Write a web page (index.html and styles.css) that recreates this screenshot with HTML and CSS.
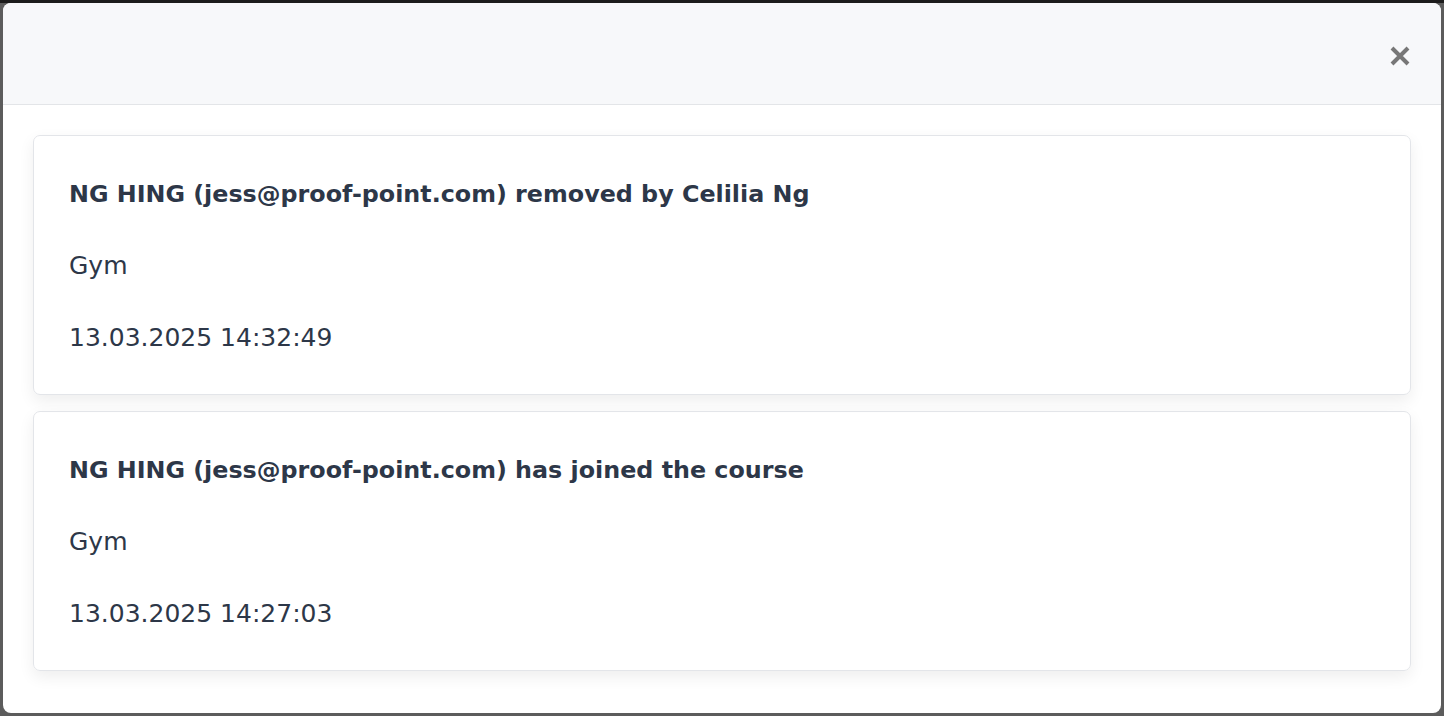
FILE: index.html
```html
<!DOCTYPE html>
<html>
<head>
<meta charset="utf-8">
<link rel="stylesheet" href="styles.css">
</head>
<body>
<div class="modal">
  <div class="modal-header">
    <button class="close" aria-label="Close">
      <svg width="20" height="20" viewBox="0 0 20 20"><path d="M2 2 L18 18 M18 2 L2 18" stroke="#777" stroke-width="4" stroke-linecap="butt"/></svg>
    </button>
  </div>
  <div class="modal-body">
    <div class="card">
      <p class="title">NG HING (jess@proof-point.com) removed by Celilia Ng</p>
      <p class="line">Gym</p>
      <p class="line">13.03.2025 14:32:49</p>
    </div>
    <div class="card">
      <p class="title">NG HING (jess@proof-point.com) has joined the course</p>
      <p class="line">Gym</p>
      <p class="line">13.03.2025 14:27:03</p>
    </div>
  </div>
</div>
</body>
</html>
```
FILE: styles.css
```css
html, body {
  margin: 0;
  height: 100%;
}
body {
  background: #5c5c5c;
  border-top: 3px solid #1c1c1c;
  box-sizing: border-box;
  padding: 0 3px 3px 3px;
  font-family: "DejaVu Sans", Verdana, sans-serif;
  color: #2d3748;
}
.modal {
  height: 100%;
  background: #fff;
  border-radius: 8px;
  overflow: hidden;
  display: flex;
  flex-direction: column;
}
.modal-header {
  height: 102px;
  flex-shrink: 0;
  background: #f7f8fa;
  border-bottom: 1px solid #e3e5e8;
  display: flex;
  align-items: flex-start;
  justify-content: flex-end;
  padding: 43px 31px 0 0;
  box-sizing: border-box;
}
.close {
  border: 0;
  background: none;
  padding: 0;
  width: 20px;
  height: 20px;
  cursor: pointer;
  display: flex;
}
.modal-body {
  padding: 30px 30px;
  display: flex;
  flex-direction: column;
  gap: 16px;
}
.card {
  border: 1px solid #e3e5e9;
  border-radius: 7px;
  box-shadow: 0 6px 16px rgba(0, 0, 0, 0.07);
  padding: 40px 35px 38px;
  display: flex;
  flex-direction: column;
  gap: 36px;
}
.card p {
  margin: 0;
  line-height: 36px;
  font-size: 25px;
}
.card p.title {
  font-weight: bold;
  font-size: 23.8px;
}
```
